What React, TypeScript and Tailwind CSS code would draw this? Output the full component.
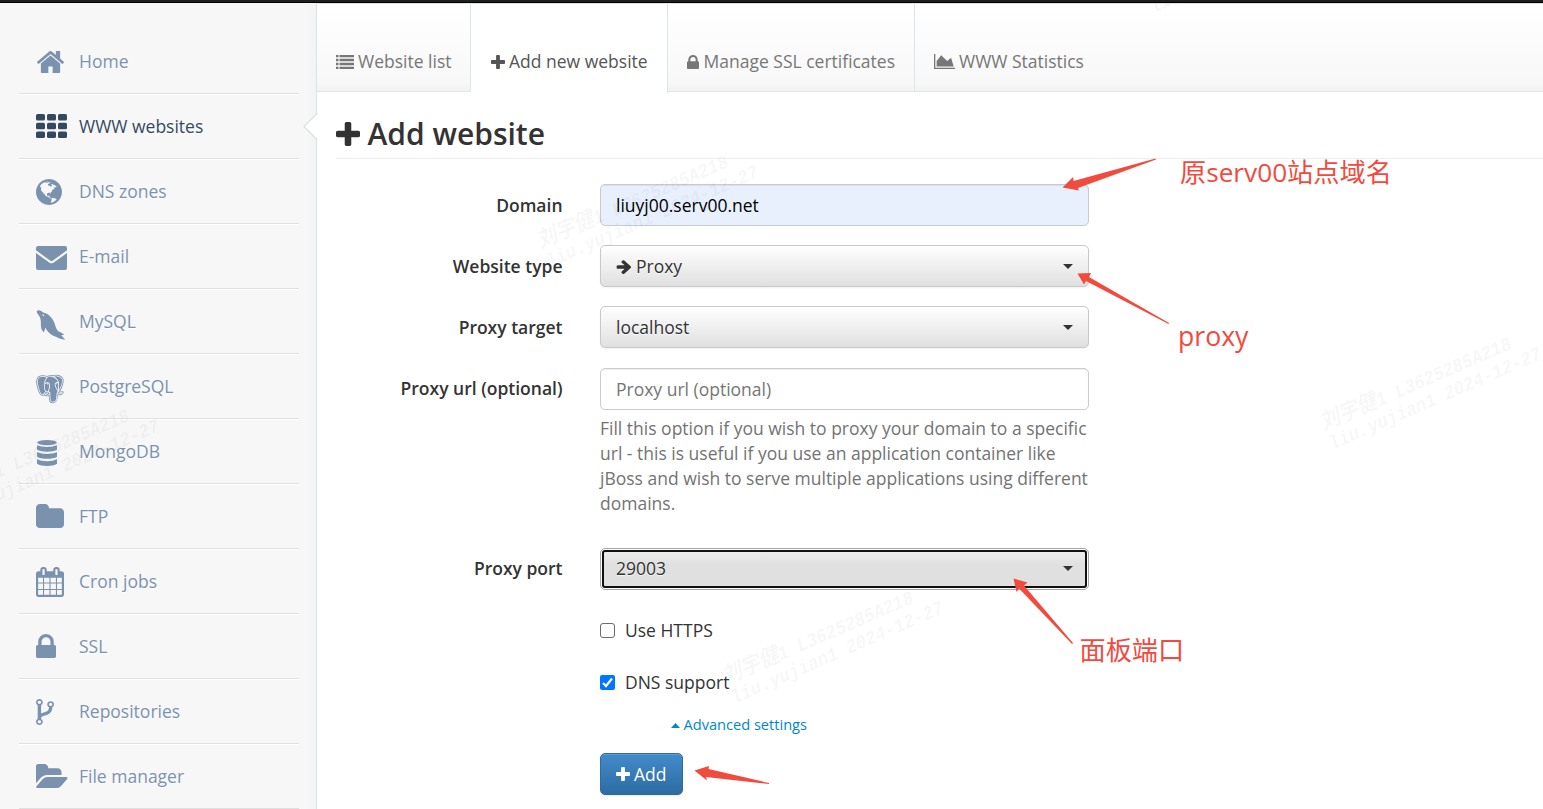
import type { ReactNode } from "react";
import { BiLogoPostgresql } from "react-icons/bi";

const P = {
  home: "M1472 992v480q0 26-19 45t-45 19h-384v-384h-256v384h-384q-26 0-45-19t-19-45v-480q0-1 .5-3t.5-3l575-474 575 474q1 2 1 6zm223-69l-62 74q-8 9-21 11h-3q-13 0-21-7l-692-577-692 577q-12 8-24 7-13-2-21-11l-62-74q-8-10-7-23.5t11-21.5l719-599q32-26 76-26t76 26l244 204v-195q0-14 9-23t23-9h192q14 0 23 9t9 23v408l219 182q10 8 11 21.5t-7 23.5z",
  globe:
    "M896 128q209 0 385.5 103t279.5 279.5 103 385.5-103 385.5-279.5 279.5-385.5 103-385.5-103-279.5-279.5-103-385.5 103-385.5 279.5-279.5 385.5-103zm274 521q-2 1-9.5 9.5t-13.5 9.5q2 0 4.5-5t5-11 3.5-7q6-7 22-15 14-6 52-12 34-8 51 11-2-2 9.5-13t14.5-12q3-2 15-4.5t15-7.5l2-22q-12 1-17.5-7t-6.5-21q0 2-6 8 0-7-4.5-8t-11.5 1-9 1q-10-3-15-7.5t-8-16.5-4-15q-2-5-9.5-11t-9.5-10q-1-2-2.5-5.5t-3-6.5-4-5.5-5.5-2.5-7 5-7.5 10-4.5 5q-3-2-6-1.5t-4.5 1-4.5 3-5 3.5q-3 2-8.5 3t-8.5 2q15-5-1-11-10-4-16-3 9-4 7.5-12t-8.5-14h5q-1-4-8.5-8.5t-17.5-8.5-13-6q-8-5-34-9.5t-33-.5q-5 6-4.5 10.5t4 14 3.5 12.5q1 6-5.5 13t-6.5 12q0 7 14 15.5t10 21.5q-3 8-16 16t-16 12q-5 8-1.5 18.5t10.5 16.5q2 2 1.5 4t-3.5 4.5-5.5 4-6.5 3.5l-3 2q-11 5-20.5-6t-13.5-26q-7-25-16-30-23-8-29 1-5-13-41-26-25-9-58-4 6-1 0-15-7-15-19-12 3-6 4-17.5t1-13.5q3-13 12-23 1-1 7-8.5t9.5-13.5.5-6q35 4 50-11 5-5 11.5-17t10.5-17q9-6 14-5.5t14.5 5.5 14.5 5q14 1 15.5-11t-7.5-20q12 1 3-17-4-7-8-9-12-4-27 5-8 4 2 8-1-1-9.5 10.5t-16.5 17.5-16-5q-1-1-5.5-13.5t-9.5-13.5q-8 0-16 15 3-8-11-15t-24-8q19-12-8-27-7-4-20.5-5t-19.5 4q-5 7-5.5 11.5t5 8 10.5 5.5 11.5 4 8.5 3q14 10 8 14-2 1-8.5 3.5t-11.5 4.5-6 4q-3 4 0 14t-2 14q-5-5-9-17.5t-7-16.5q7 9-25 6l-10-1q-4 0-16 2t-20.5 1-13.5-8q-4-8 0-20 1-4 4-2-4-3-11-9.5t-10-8.5q-46 15-94 41 6 1 12-1 5-2 13-6.5t10-5.5q34-14 42-7l5-5q14 16 20 25-7-4-30-1-20 6-22 12 7 12 5 18-4-3-11.5-10t-14.5-11-15-5q-16 0-22 1-146 80-235 222 7 7 12 8 4 1 5 9t2.5 11 11.5-3q9 8 3 19 1-1 44 27 19 17 21 21 3 11-10 18-1-2-9-9t-9-4q-3 5 .5 18.5t10.5 12.5q-7 0-9.5 16t-2.5 35.5-1 23.5l2 1q-3 12 5.5 34.5t21.5 19.5q-13 3 20 43 6 8 8 9 3 2 12 7.5t15 10 10 10.5q4 5 10 22.5t14 23.5q-2 6 9.5 20t10.5 23q-1 0-2.5 1t-2.5 1q3 7 15.5 14t15.5 13q1 3 2 10t3 11 8 2q2-20-24-62-15-25-17-29-3-5-5.5-15.5t-4.5-14.5q2 0 6 1.5t8.5 3.5 7.5 4 2 3q-3 7 2 17.5t12 18.5 17 19 12 13q6 6 14 19.5t0 13.5q9 0 20 10.5t17 19.5q5 8 8 26t5 24q2 7 8.5 13.5t12.5 9.5l16 8 13 7q5 2 18.5 10.5t21.5 11.5q10 4 16 4t14.5-2.5 13.5-3.5q15-2 29 15t21 21q36 19 55 11-2 1 .5 7.5t8 15.5 9 14.5 5.5 8.5q5 6 18 15t18 15q6-4 7-9-3 8 7 20t18 10q14-3 14-32-31 15-49-18 0-1-2.5-5.5t-4-8.5-2.5-8.5 0-7.5 5-3q9 0 10-3.5t-2-12.5-4-13q-1-8-11-20t-12-15q-5 9-16 8t-16-9q0 1-1.5 5.5t-1.5 6.5q-13 0-15-1 1-3 2.5-17.5t3.5-22.5q1-4 5.5-12t7.5-14.5 4-12.5-4.5-9.5-17.5-2.5q-19 1-26 20-1 3-3 10.5t-5 11.5-9 7q-7 3-24 2t-24-5q-13-8-22.5-29t-9.5-37q0-10 2.5-26.5t3-25-5.5-24.5q3-2 9-9.5t10-10.5q2-1 4.5-1.5t4.5 0 4-1.5 3-6q-1-1-4-3-3-3-4-3 7 3 28.5-1.5t27.5 1.5q15 11 22-2 0-1-2.5-9.5t-.5-13.5q5 27 29 9 3 3 15.5 5t17.5 5q3 2 7 5.5t5.5 4.5 5-.5 8.5-6.5q10 14 12 24 11 40 19 44 7 3 11 2t4.5-9.5 0-14-1.5-12.5l-1-8v-18l-1-8q-15-3-18.5-12t1.5-18.5 15-18.5q1-1 8-3.5t15.5-6.5 12.5-8q21-19 15-35 7 0 11-9-1 0-5-3t-7.5-5-4.5-2q9-5 2-16 5-3 7.5-11t7.5-10q9 12 21 2 8-8 1-16 5-7 20.5-10.5t18.5-9.5q7 2 8-2t1-12 3-12q4-5 15-9t13-5l17-11q3-4 0-4 18 2 31-11 10-11-6-20 3-6-3-9.5t-15-5.5q3-1 11.5-.5t10.5-1.5q15-10-7-16-17-5-43 12zm-163 877q206-36 351-189-3-3-12.5-4.5t-12.5-3.5q-18-7-24-8 1-7-2.5-13t-8-9-12.5-8-11-7q-2-2-7-6t-7-5.5-7.5-4.5-8.5-2-10 1l-3 1q-3 1-5.5 2.5t-5.5 3-4 3 0 2.5q-21-17-36-22-5-1-11-5.5t-10.5-7-10-1.5-11.5 7q-5 5-6 15t-2 13q-7-5 0-17.5t2-18.5q-3-6-10.5-4.5t-12 4.5-11.5 8.5-9 6.5-8.5 5.5-8.5 7.5q-3 4-6 12t-5 11q-2-4-11.5-6.5t-9.5-5.5q2 10 4 35t5 38q7 31-12 48-27 25-29 40-4 22 12 26 0 7-8 20.5t-7 21.5q0 6 2 16z",
  folder:
    "M1728 608v704q0 92-66 158t-158 66h-1216q-92 0-158-66t-66-158v-960q0-92 66-158t158-66h320q92 0 158 66t66 158v32h672q92 0 158 66t66 158z",
  calendar:
    "M192 1664h288v-288h-288v288zm352 0h320v-288h-320v288zm-352-352h288v-320h-288v320zm352 0h320v-320h-320v320zm-352-384h288v-288h-288v288zm736 736h320v-288h-320v288zm-384-736h320v-288h-320v288zm768 736h288v-288h-288v288zm-384-352h320v-320h-320v320zm-352-864v-288q0-13-9.5-22.5t-22.5-9.5h-64q-13 0-22.5 9.5t-9.5 22.5v288q0 13 9.5 22.5t22.5 9.5h64q13 0 22.5-9.5t9.5-22.5zm736 864h288v-320h-288v320zm-384-384h320v-288h-320v288zm384 0h288v-288h-288v288zm32-480v-288q0-13-9.5-22.5t-22.5-9.5h-64q-13 0-22.5 9.5t-9.5 22.5v288q0 13 9.5 22.5t22.5 9.5h64q13 0 22.5-9.5t9.5-22.5zm384-64v1280q0 52-38 90t-90 38h-1408q-52 0-90-38t-38-90v-1280q0-52 38-90t90-38h128v-96q0-66 47-113t113-47h64q66 0 113 47t47 113v96h384v-96q0-66 47-113t113-47h64q66 0 113 47t47 113v96h128q52 0 90 38t38 90z",
  lock: "M640 768h512v-192q0-106-75-181t-181-75-181 75-75 181v192zm832 96v576q0 40-28 68t-68 28h-960q-40 0-68-28t-28-68v-576q0-40 28-68t68-28h32v-192q0-184 132-316t316-132 316 132 132 316v192h32q40 0 68 28t28 68z",
  fork: "M672 1472q0-40-28-68t-68-28-68 28-28 68 28 68 68 28 68-28 28-68zm0-1152q0-40-28-68t-68-28-68 28-28 68 28 68 68 28 68-28 28-68zm640 128q0-40-28-68t-68-28-68 28-28 68 28 68 68 28 68-28 28-68zm96 0q0 52-26 96.5t-70 69.5q-2 287-226 414-67 38-203 81-128 40-169.5 71t-41.5 100v26q44 25 70 69.5t26 96.5q0 80-56 136t-136 56-136-56-56-136q0-52 26-96.5t70-69.5v-820q-44-25-70-69.5t-26-96.5q0-80 56-136t136-56 136 56 56 136q0 52-26 96.5t-70 69.5v497q54-26 154-57 55-17 87.5-29.5t70.5-31 59-39.5 40.5-51 28-69.5 8.5-91.5q-44-25-70-69.5t-26-96.5q0-80 56-136t136-56 136 56 56 136z",
  open: "M1815 952q0 31-31 66l-336 396q-43 51-120.5 86.5t-143.5 35.5h-1088q-34 0-60.5-13t-26.5-43q0-31 31-66l336-396q43-51 120.5-86.5t143.5-35.5h1088q34 0 60.5 13t26.5 43zm-343-344v160h-832q-94 0-197 47.5t-164 119.5l-337 396-5 6q0-4-.5-12.5t-.5-12.5v-960q0-92 66-158t158-66h320q92 0 158 66t66 158v32h544q92 0 158 66t66 158z",
  plus: "M1600 736v192q0 40-28 68t-68 28h-416v416q0 40-28 68t-68 28h-192q-40 0-68-28t-28-68v-416h-416q-40 0-68-28t-28-68v-192q0-40 28-68t68-28h416v-416q0-40 28-68t68-28h192q40 0 68 28t28 68v416h416q40 0 68 28t28 68z",
  arrow:
    "M1600 960q0 54-37 91l-651 651q-39 37-91 37-51 0-90-37l-75-75q-38-38-38-91t38-91l293-293h-704q-52 0-84.5-37.5t-32.5-90.5v-128q0-53 32.5-90.5t84.5-37.5h704l-293-294q-38-36-38-90t38-90l75-75q38-38 90-38 53 0 91 38l651 651q37 35 37 90z",
  chart: "M2048 1536v128h-2048v-1536h128v1408h1920zm-384-1024l256 896h-1664v-576l448-576 576 576z",
};

function Glyph({ d, box, className }: { d: string; box: string; className: string }) {
  return (
    <svg viewBox={box} preserveAspectRatio="none" fill="currentColor" className={`shrink-0 ${className}`}>
      <path d={d} />
    </svg>
  );
}

const items: { label: string; icon: ReactNode; active?: boolean }[] = [
  { label: "Home", icon: <Glyph d={P.home} box="89 253 1614 1283" className="ml-[1px] mt-[2px] h-[22px] w-[27px]" /> },
  {
    label: "WWW websites",
    active: true,
    icon: (
      <svg viewBox="0 0 31 24" fill="currentColor" className="h-[24px] w-[31px]">
        {[0, 8.7, 17.4].map((y) =>
          [0, 11, 22].map((x) => <rect key={`${x}-${y}`} x={x} y={y} width="9" height="6.6" rx="1.6" />),
        )}
      </svg>
    ),
  },
  { label: "DNS zones", icon: <Glyph d={P.globe} box="128 128 1536 1536" className="mt-[2px] size-[26px]" /> },
  {
    label: "E-mail",
    icon: (
      <svg viewBox="0 0 31 24" fill="currentColor" className="mt-[4px] h-[24px] w-[31px]">
        <path d="M2 0H29Q31 0 31 2V4.3L16.6 14.8Q15.5 15.5 14.4 14.8L0 4.3V2Q0 0 2 0Z" />
        <path d="M0 7L13.6 16.7Q15.5 17.9 17.4 16.7L31 7V22Q31 24 29 24H2Q0 24 0 22Z" />
      </svg>
    ),
  },
  {
    label: "MySQL",
    icon: (
      <svg viewBox="0 0 30 30" fill="currentColor" className="mt-[8px] size-[30px]">
        <path
          fillRule="evenodd"
          d="M.8 1.2C1.6-.2 3.8.1 5.2 1.1L7.2 2.4C10.6 2.9 13.4 5 15.4 7.8C17.6 10.7 18.6 13 19.3 15.6C19.9 18 20.8 19.7 22.2 21.2C24.6 22.4 26.6 23 28.3 24.7L25.2 25.3C26.7 26.8 28 28 29.1 29.8C25.8 29.2 22.5 28.5 19.9 26.8C16.4 25.7 12.8 23.2 10.7 19.9L9.3 17.7C8.7 19.2 8.7 20.7 7.8 22.3C6 21 5.1 18.7 4.9 16.3C5 14.5 4.8 12.8 4.8 11C4.6 8.3 3.5 6.1 2 4.2C1.2 3.2.5 2.2.8 1.2ZM7 4C6.2 4.1 6.3 5.5 7.2 6.3C7.9 6.3 8.3 5.2 7 4Z"
        />
      </svg>
    ),
  },
  { label: "PostgreSQL", icon: <BiLogoPostgresql className="-ml-[3px] mt-[5px] size-[34px] shrink-0" /> },
  {
    label: "MongoDB",
    icon: (
      <svg viewBox="0 0 20 26" fill="currentColor" className="ml-[1px] mt-[4px] h-[26px] w-[20px]">
        <ellipse cx="10" cy="2.6" rx="9.8" ry="2.6" />
        <path d="M0 5.2Q4 7 10 7T20 5.2V9.8Q16.5 11.7 10 11.7T0 9.8ZM0 12.2Q4 14 10 14T20 12.2V16.8Q16.5 18.8 10 18.8T0 16.8ZM0 19.3Q4 21.2 10 21.2T20 19.3V23.8Q16.5 26 10 26T0 23.8Z" />
      </svg>
    ),
  },
  { label: "FTP", icon: <Glyph d={P.folder} box="64 128 1664 1408" className="h-[24px] w-[28px]" /> },
  { label: "Cron jobs", icon: <Glyph d={P.calendar} box="64 0 1664 1792" className="mt-[2px] h-[30px] w-[28px]" /> },
  { label: "SSL", icon: <Glyph d={P.lock} box="320 128 1152 1408" className="h-[24px] w-[20px]" /> },
  { label: "Repositories", icon: <Glyph d={P.fork} box="384 128 1024 1536" className="mt-[2px] h-[26px] w-[18px]" /> },
  { label: "File manager", icon: <Glyph d={P.open} box="0 128 1815 1408" className="h-[24px] w-[31.5px]" /> },
];

function Tab({ icon, label, active, width }: { icon: ReactNode; label: string; active?: boolean; width: string }) {
  return (
    <div
      className={`flex items-center border-r border-[#dbe5ec] pl-[19px] pt-[28px] ${width} ${
        active ? "bg-white text-[#555]" : "text-[#777]"
      }`}
    >
      {icon}
      <span className="whitespace-nowrap">{label}</span>
    </div>
  );
}

function Row({ label, children, className = "" }: { label: string; children: ReactNode; className?: string }) {
  return (
    <div className={`flex ${className}`}>
      <div className="mr-[37.5px] w-[226.5px] pt-[9px] text-right font-semibold leading-[25px]">{label}</div>
      {children}
    </div>
  );
}

function Select({ children, focused }: { children: ReactNode; focused?: boolean }) {
  return (
    <div
      className={`flex h-[42px] w-[489px] items-center justify-between rounded-[5px] border pl-[15px] pr-[15px] [text-shadow:0_1px_1px_rgba(255,255,255,0.75)] ${
        focused
          ? "border-[#a5a5a5] bg-white bg-linear-to-b from-[#eee] via-[#e0e0e0] via-40% to-[#e0e0e0] pb-[2px] outline-2 -outline-offset-4 outline-[#101010] shadow-[inset_0_0_0_1px_#fff]"
          : "border-[#c9c9c9] bg-linear-to-b from-white to-[#e0e0e0] shadow-[0_1px_2px_rgba(0,0,0,0.06)]"
      }`}
    >
      <span className="flex items-center">{children}</span>
      <svg viewBox="0 0 10 5" fill="#333" className="h-[5px] w-[10px]">
        <path d="M0 0H10L5 5Z" />
      </svg>
    </div>
  );
}

function Watermark({ className }: { className: string }) {
  return (
    <div
      className={`pointer-events-none absolute w-[240px] origin-top-left [transform:rotate(-23.5deg)_scaleY(1.12)] whitespace-pre font-['Liberation_Mono','Noto_Sans_CJK_SC',monospace] text-[17.4px] font-bold italic text-black/[0.05] ${className}`}
    >
      <div className="h-[20px] leading-[20px]">
        <span className="text-[20px] leading-[20px]">刘宇健</span>1 L3625285A218
      </div>
      <div className="h-[20px] leading-[20px]">liu.yujian1 2024-12-27</div>
    </div>
  );
}

export default function App() {
  return (
    <div className="relative flex h-[809px] w-[1543px] flex-col overflow-hidden bg-white font-['Open_Sans',sans-serif] text-[17.5px] leading-[25px] text-[#333]">
      <div className="h-[3px] shrink-0 border-b border-black bg-[#1f1f1f]" />
      <div className="flex min-h-0 flex-1">
        <aside className="w-[317px] shrink-0 border-r border-[#dbe3ea] bg-linear-to-r from-[#f7f7f7] from-97% to-[#f2f3f4] pl-[19px] pr-[18px] pt-[26px]">
          {items.map((it) => (
            <div
              key={it.label}
              className={`flex h-[65px] w-[280px] items-center border-b border-[#e0e0e0] pl-[17px] shadow-[0_1px_0_#fff] [text-shadow:0_1px_0_#fff] ${
                it.active ? "text-[#34495e]" : "text-[#7b92ae]"
              }`}
            >
              <span className="flex h-[64px] w-[43px] items-center">{it.icon}</span>
              <span>{it.label}</span>
            </div>
          ))}
        </aside>
        <main className="min-w-0 flex-1">
          <div className="h-px bg-[#e4e4e4]" />
          <nav className="flex h-[88px] items-start border-b border-[#e2e5e7] bg-linear-to-b from-white via-[#f8f8f8] via-90% to-[#f2f2f2]">
            <Tab
              width="h-[87px] w-[154px]"
              label="Website list"
              icon={
                <svg viewBox="0 0 18 14" fill="currentColor" className="mr-[4px] h-[14px] w-[18px]">
                  {[0, 4, 8, 12].map((y) => (
                    <path key={y} d={`M0 ${y - 0.3}H2.5V${y + 2.3}H0ZM3.5 ${y - 0.3}H18V${y + 2.3}H3.5Z`} />
                  ))}
                </svg>
              }
            />
            <Tab width="h-[89px] w-[197px] pb-[2px]" active label="Add new website" icon={<Glyph d={P.plus} box="192 128 1408 1408" className="ml-[1px] mr-[4px] size-[14px]" />} />
            <Tab width="h-[87px] w-[247px]" label="Manage SSL certificates" icon={<Glyph d={P.lock} box="320 128 1152 1408" className="mr-[4.5px] h-[14px] w-[12px]" />} />
            <div className="flex h-[87px] items-center pl-[19px] pt-[28px] text-[#777]">
              <Glyph d={P.chart} box="0 128 2048 1536" className="mr-[4px] h-[15px] w-[21px]" />
              WWW Statistics
            </div>
          </nav>
          <div className="pl-[19px]">
            <h1 className="flex h-[67px] items-center border-b border-[#eee] pt-[17px] text-[30px] font-semibold leading-[40px]">
              <Glyph d={P.plus} box="192 128 1408 1408" className="mr-[7.5px] size-[24px]" />
              Add website
            </h1>
            <Row label="Domain" className="mt-[25px]">
              <div className="flex h-[42px] w-[489px] items-center rounded-[5px] border border-[#c8cacf] bg-[#e8f0fe] pl-[15px] text-black shadow-[inset_0_1px_1px_rgba(0,0,0,0.075)]">
                liuyj00.serv00.net
              </div>
            </Row>
            <Row label="Website type" className="mt-[19px]">
              <Select>
                <Glyph d={P.arrow} box="64 53 1536 1686" className="mr-[5px] size-[15px]" />
                <span>Proxy</span>
              </Select>
            </Row>
            <Row label="Proxy target" className="mt-[19px]">
              <Select>
                <span>localhost</span>
              </Select>
            </Row>
            <Row label="Proxy url (optional)" className="mt-[19px]">
              <div className="mt-px w-[489px]">
                <div className="flex h-[42px] items-center rounded-[5px] border border-[#ccc] bg-white pl-[15px] text-[#757575] shadow-[inset_0_1px_1px_rgba(0,0,0,0.075)]">
                  Proxy url (optional)
                </div>
                <p className="mt-[6px] whitespace-nowrap text-[#737373]">
                  Fill this option if you wish to proxy your domain to a specific
                  <br />
                  url - this is useful if you use an application container like
                  <br />
                  jBoss and wish to serve multiple applications using different
                  <br />
                  domains.
                </p>
              </div>
            </Row>
            <Row label="Proxy port" className="-mb-px mt-[31px]">
              <div className="pt-px">
                <Select focused>
                  <span>29003</span>
                </Select>
              </div>
            </Row>
            <div className="ml-[264px] flex flex-col items-start">
              <label className="mt-[29px] flex items-center">
                <span className="mr-[10px] size-[15px] rounded-[3px] border border-[#6b6b6b] bg-white" />
                Use HTTPS
              </label>
              <label className="mt-[27px] flex items-center">
                <span className="mr-[10px] flex size-[15px] items-center justify-center rounded-[2px] bg-[#0075ff]">
                  <svg viewBox="0 0 15 15" fill="none" stroke="#fff" strokeWidth="2.2" className="size-[15px]">
                    <path d="M3 8L6 11L12 3.5" />
                  </svg>
                </span>
                DNS support
              </label>
              <a className="ml-[71px] mt-[18px] flex h-[22px] items-center text-[14.6px] leading-[22px] text-[#08c]">
                <svg viewBox="0 0 9 5" fill="currentColor" className="mr-[3.5px] mt-[2px] h-[5px] w-[9px]">
                  <path d="M0 5H9L4.5 0Z" />
                </svg>
                Advanced settings
              </a>
              <button className="mt-[18px] flex h-[42px] w-[83px] items-center rounded-[5px] border border-[#2d6ca2] bg-linear-to-b from-[#428bca] to-[#2d6ca2] pl-[15px] text-white shadow-[inset_0_1px_0_rgba(255,255,255,0.15),0_1px_1px_rgba(0,0,0,0.075)]">
                <Glyph d={P.plus} box="192 128 1408 1408" className="mr-[4px] size-[14px]" />
                Add
              </button>
            </div>
          </div>
        </main>
      </div>

      <svg viewBox="0 0 15 29" className="absolute left-[303px] top-[112px] h-[29px] w-[15px]">
        <path d="M15 1L1 14.5L15 28Z" fill="#fff" />
        <path d="M14.5 1L1 14.5L14.5 28" fill="none" stroke="#dbe3ea" strokeWidth="1.5" />
      </svg>

      <Watermark className="left-[1317px] top-[415px]" />
      <Watermark className="left-[534px] top-[233px]" />
      <Watermark className="left-[719px] top-[669px]" />
      <Watermark className="left-[-65px] top-[487px]" />
      <Watermark className="left-[1138px] top-[-22px]" />

      <svg viewBox="0 0 1543 809" fill="#f24a3d" className="pointer-events-none absolute inset-0 h-[809px] w-[1543px]">
        <path d="M1062.500 187.500L1073 177L1073.500 181L1155.500 158.500L1156 159.500L1078 188L1079 190.500Z" />
        <path d="M1077.500 273.500L1091 273L1089 277L1169 323L1168.500 324L1086 281L1084 284.500Z" />
        <path d="M1013.500 578.500L1027.500 582.500L1024 585.500L1073 643L1072 644L1019 588.500L1016.500 592Z" />
        <path d="M694.500 770.500L709 766L708.500 769L769 783L769 784L706 777L707 780.500Z" />
      </svg>
      <div className="absolute left-[1180px] top-[154px] whitespace-nowrap font-['Open_Sans','Noto_Sans_CJK_SC',sans-serif] text-[26.2px] leading-[36px] text-[#f24a3d]">
        原serv00站点域名
      </div>
      <div className="absolute left-[1178px] top-[318px] text-[26.6px] leading-[36px] text-[#f24a3d]">proxy</div>
      <div className="absolute left-[1079.5px] top-[631px] whitespace-nowrap font-['Noto_Sans_CJK_SC',sans-serif] text-[26.2px] leading-[36px] text-[#f24a3d]">
        面板端口
      </div>
    </div>
  );
}
